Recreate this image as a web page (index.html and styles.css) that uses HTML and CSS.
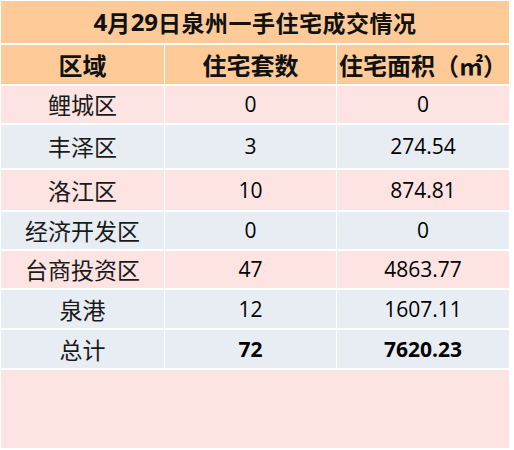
FILE: index.html
```html
<!DOCTYPE html>
<html lang="zh-CN">
<head>
<meta charset="utf-8">
<title>4月29日泉州一手住宅成交情况</title>
<link rel="stylesheet" href="styles.css">
</head>
<body>
<div class="sheet">
  <div class="cell title"><span class="num">4</span>月<span class="num">29</span>日泉州一手住宅成交情况</div>

  <div class="cell head">区域</div>
  <div class="cell head">住宅套数</div>
  <div class="cell head">住宅面积（㎡）</div>

  <div class="cell pink">鲤城区</div>
  <div class="cell pink num">0</div>
  <div class="cell pink num">0</div>

  <div class="cell blue">丰泽区</div>
  <div class="cell blue num">3</div>
  <div class="cell blue num">274.54</div>

  <div class="cell pink">洛江区</div>
  <div class="cell pink num">10</div>
  <div class="cell pink num">874.81</div>

  <div class="cell blue">经济开发区</div>
  <div class="cell blue num">0</div>
  <div class="cell blue num">0</div>

  <div class="cell pink">台商投资区</div>
  <div class="cell pink num">47</div>
  <div class="cell pink num">4863.77</div>

  <div class="cell blue">泉港</div>
  <div class="cell blue num">12</div>
  <div class="cell blue num">1607.11</div>

  <div class="cell blue">总计</div>
  <div class="cell blue num strong">72</div>
  <div class="cell blue num strong">7620.23</div>

  <div class="cell pink empty"></div>
</div>
</body>
</html>
```

FILE: styles.css
```css
html, body {
  margin: 0;
  padding: 0;
  background: #ffffff;
}

body {
  padding: 1px 0 0 1px;
  font-family: "Noto Sans CJK SC", "Noto Sans", sans-serif;
  color: #1a1a1a;
}

.sheet {
  width: 508px;
  display: grid;
  grid-template-columns: 163px 171px 172px;
  grid-template-rows: 42px 39px 37px 43px 40px 37px 37px 38px 38px 78px;
  column-gap: 1px;
  row-gap: 2px;
  background: #ffffff;
}

.cell {
  display: flex;
  align-items: center;
  justify-content: center;
  font-size: 23px;
  line-height: 1;
  white-space: nowrap;
}

.title {
  grid-column: 1 / 4;
  background: #fdca98;
  font-weight: 700;
  font-size: 23px;
  letter-spacing: 0.5px;
  color: #111111;
}

.title .num {
  font-family: "Open Sans", "Noto Sans", sans-serif;
  font-size: 24px;
  font-weight: 700;
  letter-spacing: 0;
  color: #111111;
}

.head {
  background: #fdca98;
  font-weight: 700;
  font-size: 24px;
  color: #111111;
}

.pink {
  background: #fee3e3;
}

.blue {
  background: #e8edf4;
}

.num {
  font-family: "Open Sans", "Noto Sans", sans-serif;
  font-size: 21px;
  color: #000000;
}

.strong {
  font-weight: 700;
}

.empty {
  grid-column: 1 / 4;
}
```
